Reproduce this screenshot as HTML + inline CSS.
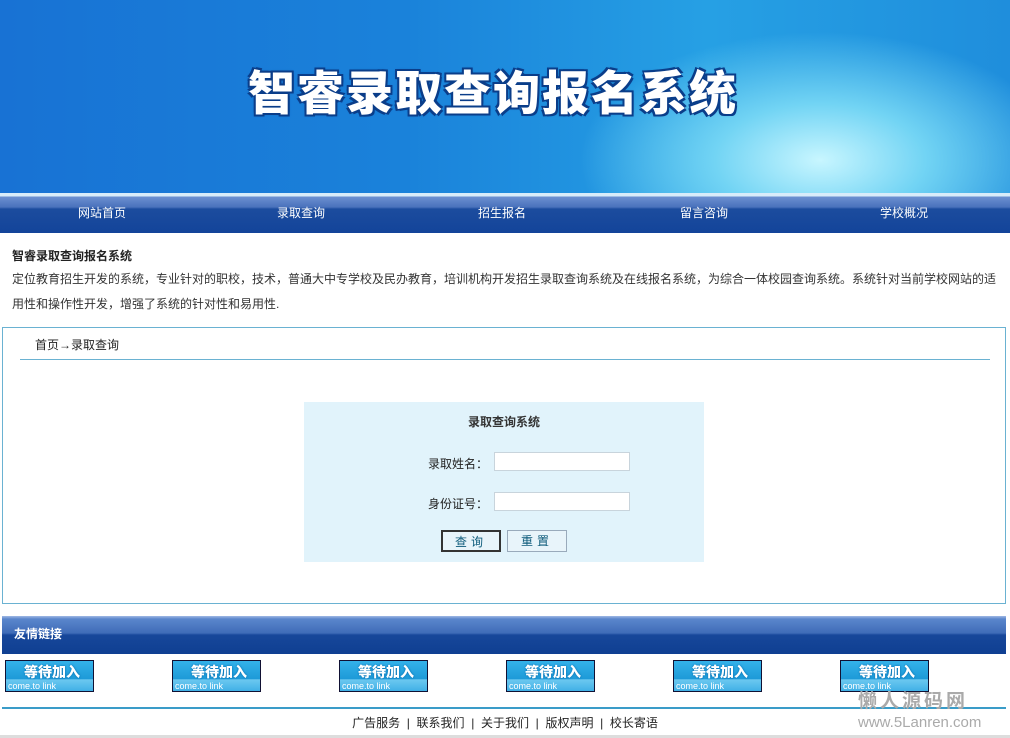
<!DOCTYPE html>
<html><head><meta charset="utf-8"><style>
*{margin:0;padding:0;box-sizing:border-box}
body{width:1010px;height:738px;background:#fff;font-family:"Liberation Sans","Noto Sans CJK SC",sans-serif;font-size:12px;color:#222;position:relative;overflow:hidden}
.abs{position:absolute}
.banner{left:0;top:0;width:1010px;height:193px;background:radial-gradient(ellipse 300px 160px at 820px 160px,#c8f6ff 0%,#72d4f4 35%,transparent 80%),linear-gradient(90deg,#1872d4 0%,#1a82da 40%,#26a0e4 70%,#1f8edc 100%)}
.title{left:248px;top:62px;font-size:47px;font-weight:900;color:#fff;letter-spacing:2px;text-shadow:0 0 3px #0b3e8a,2px 2px 0 #0b3e8a,-2px -2px 0 #0b3e8a,2px -2px 0 #0b3e8a,-2px 2px 0 #0b3e8a;font-family:"Noto Sans CJK SC",sans-serif;line-height:56px;white-space:nowrap}
.nav{left:0;top:193px;width:1010px;height:40px;background:linear-gradient(#d8ecfa 0,#d8ecfa 3px,#6b8fd0 4px,#4a72bc 14px,#1c4c9e 16px,#13449a 100%)}
.nav span{position:absolute;top:11px;color:#fff;font-size:12px}
.intro{left:12px;top:247px;width:990px;line-height:25px;font-size:12px;color:#333}
.box{left:2px;top:327px;width:1004px;height:277px;border:1px solid #6ab2d2}
.form{left:304px;top:402px;width:400px;height:160px;background:#e1f3fb}
input{position:absolute;width:136px;height:19px;border:1px solid #c8d4dc;background:#fff}
.btn{position:absolute;height:22px;width:60px;text-align:center;line-height:20px;color:#0d5a7a;font-size:12px;background:#e8f4fa;letter-spacing:4px}
.flink{left:2px;top:616px;width:1004px;height:38px;background:linear-gradient(#a0b8e4 0,#5a86cc 3px,#3f6cb8 17px,#17479a 19px,#0f3f92 100%)}
.lk{position:absolute;top:660px;width:89px;height:32px;border:1px solid #113;background:linear-gradient(#34b2ea 0,#1d9ad8 60%,#6cc8f0 62%,#40b0e6 100%);color:#fff;font-size:14px;font-weight:bold}
.lk b{position:absolute;left:18px;top:1px;text-shadow:0 0 2px #06a}
.lk i{position:absolute;left:2px;top:20px;font-size:9px;font-style:normal;font-weight:normal}
</style></head><body>
<div class="abs banner"></div>
<div class="abs title">智睿录取查询报名系统</div>
<div class="abs nav">
<span style="left:78px">网站首页</span><span style="left:277px">录取查询</span><span style="left:478px">招生报名</span><span style="left:680px">留言咨询</span><span style="left:880px">学校概况</span>
</div>
<div class="abs" style="left:12px;top:247px;font-weight:bold;font-size:12px">智睿录取查询报名系统</div>
<div class="abs intro" style="top:267px">定位教育招生开发的系统，专业针对的职校，技术，普通大中专学校及民办教育，培训机构开发招生录取查询系统及在线报名系统，为综合一体校园查询系统。系统针对当前学校网站的适用性和操作性开发，增强了系统的针对性和易用性.</div>
<div class="abs box"></div>
<div class="abs" style="left:35px;top:336px">首页→录取查询</div>
<div class="abs" style="left:20px;top:359px;width:970px;height:1px;background:#6ab2d2"></div>
<div class="abs form">
<div class="abs" style="left:0;width:400px;top:11px;text-align:center;font-weight:bold;color:#333">录取查询系统</div>
<div class="abs" style="left:124px;top:53px">录取姓名：</div>
<input style="left:190px;top:50px">
<div class="abs" style="left:124px;top:93px">身份证号：</div>
<input style="left:190px;top:90px">
<div class="btn" style="left:137px;top:128px;border:2px solid #333">查询</div>
<div class="btn" style="left:203px;top:128px;border:1px solid #9ab">重置</div>
</div>
<div class="abs flink"><span style="position:absolute;left:12px;top:9px;color:#fff;font-weight:bold;font-size:12px">友情链接</span></div>
<div class="lk" style="left:5px"><b>等待加入</b><i>come.to link</i></div>
<div class="lk" style="left:172px"><b>等待加入</b><i>come.to link</i></div>
<div class="lk" style="left:339px"><b>等待加入</b><i>come.to link</i></div>
<div class="lk" style="left:506px"><b>等待加入</b><i>come.to link</i></div>
<div class="lk" style="left:673px"><b>等待加入</b><i>come.to link</i></div>
<div class="lk" style="left:840px"><b>等待加入</b><i>come.to link</i></div>
<div class="abs" style="left:2px;top:707px;width:1004px;height:2px;background:#3a9cc8"></div>
<div class="abs" style="left:0;width:1010px;top:714px;text-align:center;color:#222">广告服务 &nbsp;| &nbsp;联系我们 &nbsp;| &nbsp;关于我们 &nbsp;| &nbsp;版权声明 &nbsp;| &nbsp;校长寄语</div>
<div class="abs" style="left:858px;top:686px;font-size:19px;font-weight:bold;color:#aaa;letter-spacing:3px">懒人源码网</div>
<div class="abs" style="left:858px;top:714px;font-size:15px;color:#aaa">www.5Lanren.com</div>
<div class="abs" style="left:0;top:735px;width:1010px;height:3px;background:#ddd"></div>
</body></html>
